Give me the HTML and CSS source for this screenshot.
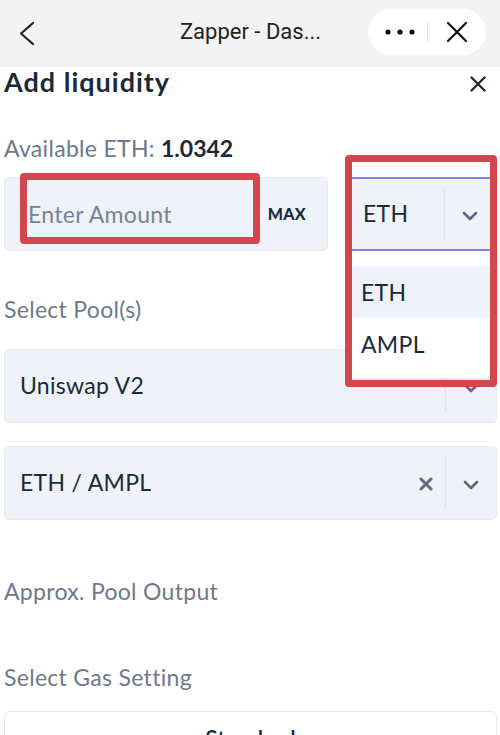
FILE: index.html
```html
<!DOCTYPE html>
<html>
<head>
<meta charset="utf-8">
<link rel="stylesheet" href="styles.css">
</head>
<body>
<header class="topbar">
  <svg class="back" width="40" height="67" viewBox="0 0 40 67"><polyline points="33,23 21,33.5 33,44" fill="none" stroke="#222" stroke-width="2.2" stroke-linecap="round" stroke-linejoin="round"/></svg>
  <div class="topbar-title">Zapper - Das...</div>
  <div class="capsule">
    <svg class="dots" width="34" height="10" viewBox="0 0 34 10"><circle cx="5" cy="5" r="2.6" fill="#111"/><circle cx="17" cy="5" r="2.6" fill="#111"/><circle cx="29" cy="5" r="2.6" fill="#111"/></svg>
    <span class="cap-div"></span>
    <svg class="cap-x" width="22" height="22" viewBox="0 0 22 22"><path d="M2 2 L20 20 M20 2 L2 20" stroke="#111" stroke-width="2.2" stroke-linecap="round"/></svg>
  </div>
</header>
<main class="content">
  <div class="title-row">
    <h1 class="title">Add liquidity</h1>
    <svg class="close" width="16" height="16" viewBox="0 0 16 16"><path d="M1.5 1.5 L14.5 14.5 M14.5 1.5 L1.5 14.5" stroke="#1b2a3a" stroke-width="2.4" stroke-linecap="round"/></svg>
  </div>
  <div class="label available">Available ETH: <b class="value">1.0342</b></div>
  <div class="amount-row">
    <div class="box amount">
      <span class="placeholder">Enter Amount</span>
      <span class="max">MAX</span>
    </div>
    <div class="box token-select">
      <span class="box-text">ETH</span>
      <span class="indicator">
        <svg class="chev" width="16" height="10" viewBox="0 0 16 10"><polyline points="2,2 8,8 14,2" fill="none" stroke="#5d677a" stroke-width="2.6" stroke-linecap="round" stroke-linejoin="round"/></svg>
      </span>
      <div class="menu">
        <div class="option active">ETH</div>
        <div class="option">AMPL</div>
      </div>
    </div>
    <div class="red-frame frame-amount"></div>
    <div class="red-frame frame-select"></div>
  </div>
  <div class="label pool-label">Select Pool(s)</div>
  <div class="box wide pool-box">
    <span class="box-text">Uniswap V2</span>
    <span class="indicator">
      <svg class="chev" width="16" height="10" viewBox="0 0 16 10"><polyline points="2,2 8,8 14,2" fill="none" stroke="#5d677a" stroke-width="2.6" stroke-linecap="round" stroke-linejoin="round"/></svg>
    </span>
  </div>
  <div class="sep"></div>
  <div class="box wide pair-box">
    <span class="box-text">ETH / AMPL</span>
    <svg class="clear" width="14" height="14" viewBox="0 0 14 14"><path d="M2 2 L12 12 M12 2 L2 12" stroke="#5f6b80" stroke-width="3" stroke-linecap="round"/></svg>
    <span class="indicator">
      <svg class="chev" width="16" height="10" viewBox="0 0 16 10"><polyline points="2,2 8,8 14,2" fill="none" stroke="#5d677a" stroke-width="2.6" stroke-linecap="round" stroke-linejoin="round"/></svg>
    </span>
  </div>
  <div class="label output-label">Approx. Pool Output</div>
  <div class="label gas-label">Select Gas Setting</div>
  <div class="gas-box">Standard</div>
</main>
</body>
</html>
```
FILE: styles.css
```css
* { box-sizing: border-box; }
html, body { margin: 0; padding: 0; }
body {
  width: 500px;
  height: 735px;
  overflow: hidden;
  background: #fff;
  font-family: Lato, "Open Sans", sans-serif;
  color: #1a2a3a;
}
.topbar {
  height: 67px;
  background: #f3f3f3;
  display: flex;
  align-items: center;
  position: relative;
}
.back { flex: none; }
.topbar-title {
  position: absolute;
  left: 0; right: 0; top: 0;
  height: 67px;
  line-height: 64px;
  text-align: center;
  font-family: Roboto, sans-serif;
  font-size: 22px;
  color: #222;
  padding-left: 1px;
}
.capsule {
  margin-left: auto;
  margin-right: 14px;
  margin-top: -3px;
  width: 118px;
  height: 46px;
  border-radius: 23px;
  background: #fff;
  display: flex;
  align-items: center;
  position: relative;
  z-index: 1;
}
.dots { margin-left: 15px; }
.cap-div { width: 1px; height: 20px; background: #e6e6e6; margin-left: 10px; }
.cap-x { margin-left: 18px; }

.content { padding: 0 3px 0 4px; }
.title-row {
  height: 30px;
  display: flex;
  align-items: center;
  justify-content: space-between;
}
.title {
  margin: 0;
  font-size: 27px;
  line-height: 30px;
  font-weight: 700;
  color: #182a3b;
  letter-spacing: 1px;
}
.close { margin-right: 11px; margin-top: 4px; }
.label {
  font-size: 23px;
  line-height: 26px;
  color: #6c798e;
  letter-spacing: 0.3px;
}
.value { color: #182a3b; font-weight: 700; letter-spacing: 0; }
.available { margin-top: 38px; }
.amount-row {
  margin-top: 16px;
  display: flex;
  gap: 22px;
  position: relative;
}
.box {
  height: 74px;
  background: #eff3f9;
  border: 1px solid #e6ebf2;
  border-radius: 5px;
  display: flex;
  align-items: center;
  font-size: 23px;
  line-height: 26px;
  letter-spacing: 0.3px;
}
.amount { width: 324px; padding-left: 23px; }
.placeholder { color: #76839a; }
.max {
  margin-left: auto;
  margin-right: 21px;
  font-size: 16px;
  font-weight: 900;
  color: #182a3b;
  letter-spacing: 0.3px;
}
.token-select {
  flex: 1;
  border: 2px solid #8b7fdc;
  border-radius: 3px;
  position: relative;
  padding-left: 11px;
}
.box-text { color: #1a2a3a; padding-bottom: 2px; }
.indicator {
  margin-left: auto;
  align-self: stretch;
  width: 51px;
  margin-top: 10px;
  margin-bottom: 10px;
  border-left: 1px solid #dde3ec;
  display: flex;
  align-items: center;
  justify-content: center;
  padding-top: 3px;
}
.menu {
  position: absolute;
  left: -2px; right: -2px;
  top: calc(100% + 5px);
  background: #fff;
  padding: 12px 0 8px;
  box-shadow: 0 2px 8px rgba(0,0,0,0.08);
}
.option {
  height: 52px;
  padding-left: 11px;
  display: flex;
  align-items: center;
  font-size: 23px;
  letter-spacing: 0.3px;
  color: #1a2a3a;
}
.option.active { background: #eff3f9; }
.red-frame {
  position: absolute;
  border: 7px solid #d2464d;
  border-radius: 4px;
  z-index: 5;
}
.frame-amount { left: 16px; top: -4px; width: 240px; height: 71px; }
.frame-select { left: 341px; top: -22px; width: 152px; height: 232px; }
.pool-label { margin-top: 45px; }
.wide { width: 493px; padding-left: 15px; }
.pool-box { margin-top: 27px; }
.sep { height: 1px; background: #f6f7f9; margin: 18px 10px 0 0; }
.pair-box { margin-top: 4px; }
.clear { margin-left: auto; margin-right: 12px; margin-top: 2px; }
.pair-box .indicator { margin-left: 0; }
.output-label { margin-top: 58px; }
.gas-label { margin-top: 60px; }
.gas-box {
  margin-top: 21px;
  width: 493px;
  height: 74px;
  border: 1px solid #e3e7ee;
  border-radius: 6px;
  background: #fff;
  text-align: center;
  font-size: 23px;
  font-weight: 600;
  padding-top: 13px;
  line-height: 26px;
  color: #1a2a3a;
}
```
